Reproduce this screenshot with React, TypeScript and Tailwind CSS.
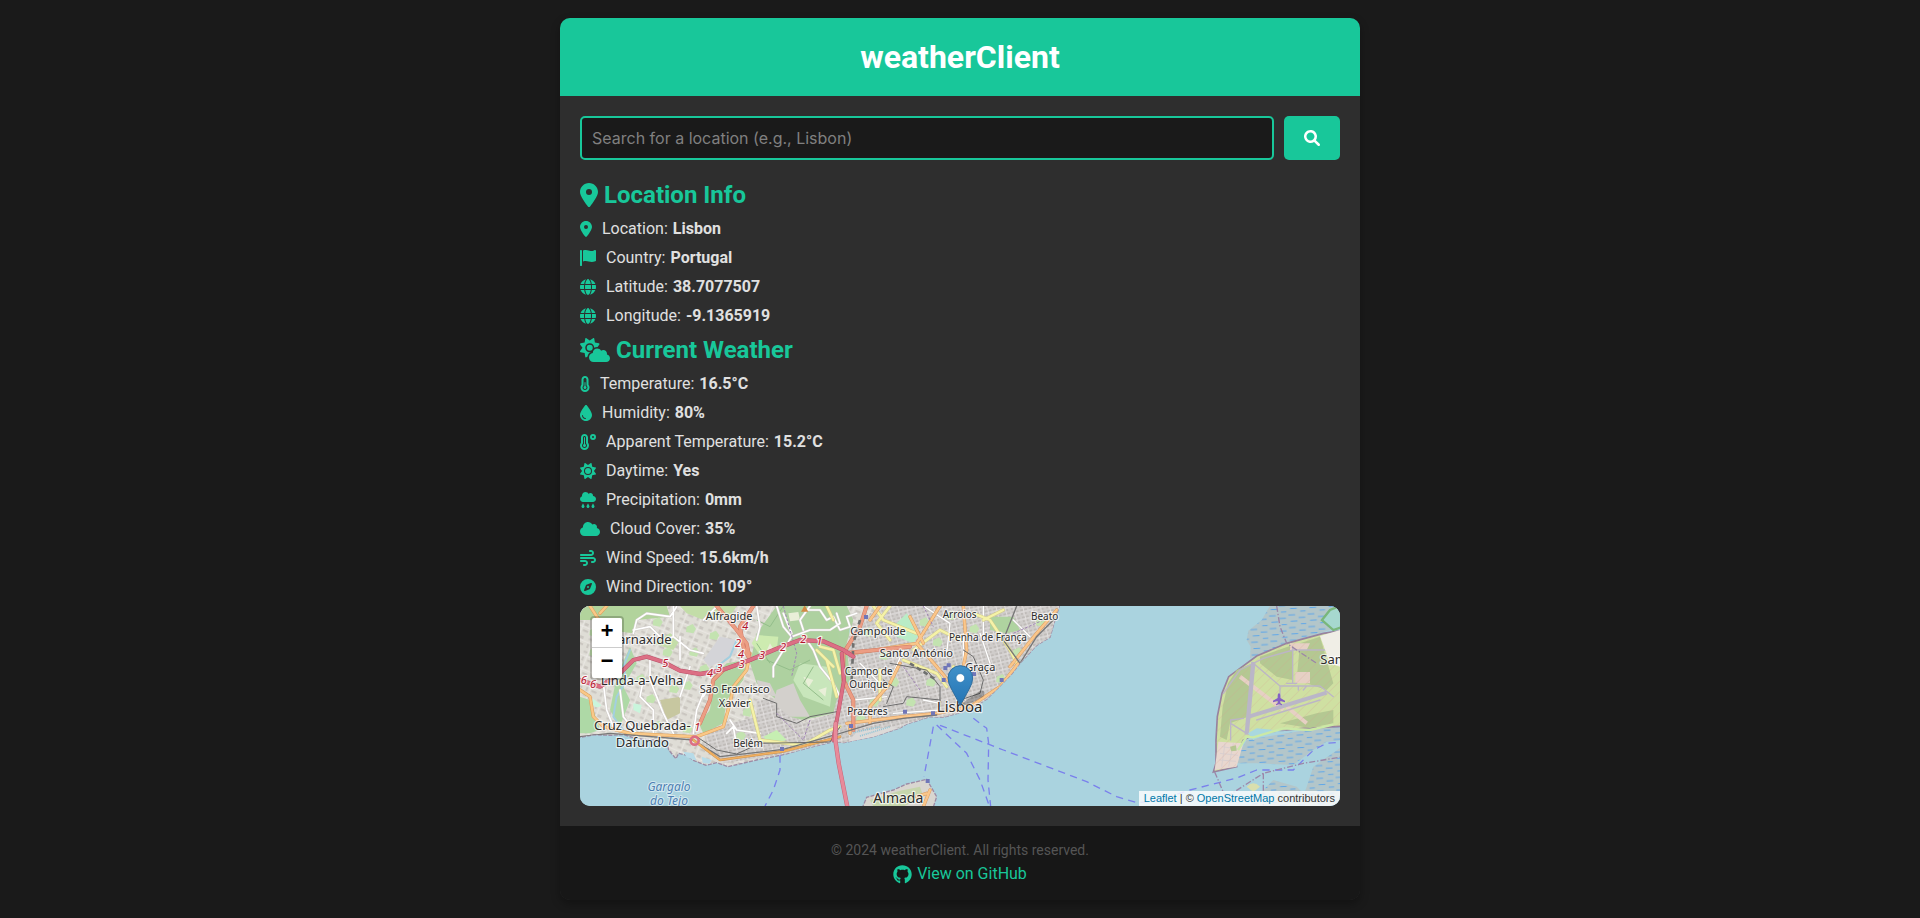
import type { FormEvent, ReactNode } from "react";
import type { IconType } from "react-icons";
import {
  FaCloud,
  FaCloudRain,
  FaCloudSun,
  FaCompass,
  FaDroplet,
  FaGithub,
  FaGlobe,
  FaLocationDot,
  FaSun,
  FaTemperatureHalf,
  FaTemperatureHigh,
  FaWind,
} from "react-icons/fa6";

const FlagIcon: IconType = ({ className }) => (
  <svg viewBox="0 0 512 512" fill="currentColor" className={className} aria-hidden>
    <path d="M64 496C64 504.8 56.75 512 48 512h-32C7.25 512 0 504.8 0 496V32c0-17.75 14.25-32 32-32s32 14.25 32 32V496zM476.3 0c-6.365 0-13.01 1.35-19.34 4.233c-45.69 20.86-79.56 27.94-107.8 27.94c-59.96 0-94.81-31.86-163.9-31.87C160.9 .3055 131.6 4.867 96 15.75v350.5c32-9.984 59.87-14.1 84.85-14.1c73.63 0 124.9 31.78 198.6 31.78c31.91 0 68.02-5.971 111.1-23.09C504.1 355.9 512 344.4 512 332.1V30.73C512 11.1 495.3 0 476.3 0z" />
  </svg>
);

const SearchIcon: IconType = ({ className }) => (
  <svg viewBox="0 0 512 512" fill="currentColor" className={className} aria-hidden>
    <path d="M500.3 443.7l-119.7-119.7c27.22-40.41 40.65-90.9 33.46-144.7C401.8 87.79 326.8 13.32 235.2 1.723C99.01-15.51-15.51 99.01 1.724 235.2c11.6 91.64 86.08 166.7 177.6 178.9c53.8 7.189 104.3-6.236 144.7-33.46l119.7 119.7c15.62 15.62 40.95 15.62 56.57 0C515.9 484.7 515.9 459.3 500.3 443.7zM79.1 208c0-70.58 57.42-128 128-128s128 57.42 128 128c0 70.58-57.42 128-128 128S79.1 278.6 79.1 208z" />
  </svg>
);

type Fact = { icon: IconType; iconWidth: string; label: string; value: string };

const locationFacts: Fact[] = [
  { icon: FaLocationDot, iconWidth: "w-3", label: "Location", value: "Lisbon" },
  { icon: FlagIcon, iconWidth: "w-4", label: "Country", value: "Portugal" },
  { icon: FaGlobe, iconWidth: "w-4", label: "Latitude", value: "38.7077507" },
  { icon: FaGlobe, iconWidth: "w-4", label: "Longitude", value: "-9.1365919" },
];

const weatherFacts: Fact[] = [
  { icon: FaTemperatureHalf, iconWidth: "w-[10px]", label: "Temperature", value: "16.5°C" },
  { icon: FaDroplet, iconWidth: "w-3", label: "Humidity", value: "80%" },
  { icon: FaTemperatureHigh, iconWidth: "w-4", label: "Apparent Temperature", value: "15.2°C" },
  { icon: FaSun, iconWidth: "w-4", label: "Daytime", value: "Yes" },
  { icon: FaCloudRain, iconWidth: "w-4", label: "Precipitation", value: "0mm" },
  { icon: FaCloud, iconWidth: "w-5", label: "Cloud Cover", value: "35%" },
  { icon: FaWind, iconWidth: "w-4", label: "Wind Speed", value: "15.6km/h" },
  { icon: FaCompass, iconWidth: "w-4", label: "Wind Direction", value: "109°" },
];

type SectionProps = { icon: IconType; iconWidth: string; title: string; facts: Fact[] };

function Section({ icon: Icon, iconWidth, title, facts }: SectionProps) {
  return (
    <section>
      <h2 className="mb-[10px] flex h-[29px] items-center gap-[6px] text-2xl font-bold text-[#18c79a]">
        <Icon className={`h-6 ${iconWidth}`} aria-hidden />
        {title}
      </h2>
      <ul>
        {facts.map((fact) => (
          <li key={fact.label} className="mb-[10px] flex h-[19px] items-center">
            <fact.icon className={`mr-[10px] h-4 text-[#18c79a] ${fact.iconWidth}`} aria-hidden />
            <span className="mr-[5px]">{fact.label}:</span>
            <strong className="font-bold">{fact.value}</strong>
          </li>
        ))}
      </ul>
    </section>
  );
}

type Label = { x: number; y: number; size: number; text: string };

/* Three map units make one pixel. */
const places: Label[] = [
  { x: 477, y: 60, size: 33, text: "Alfragide" },
  { x: 212, y: 132, size: 39, text: "Carnaxide" },
  { x: 216, y: 256, size: 39, text: "Linda-a-Velha" },
  { x: 494, y: 279, size: 33, text: "São Francisco" },
  { x: 494, y: 321, size: 33, text: "Xavier" },
  { x: 217, y: 390, size: 39, text: "Cruz Quebrada-" },
  { x: 217, y: 441, size: 39, text: "Dafundo" },
  { x: 534, y: 441, size: 30, text: "Belém" },
  { x: 924, y: 105, size: 33, text: "Campolide" },
  { x: 1169, y: 55, size: 30, text: "Arroios" },
  { x: 1424, y: 60, size: 30, text: "Beato" },
  { x: 1254, y: 124, size: 30, text: "Penha de França" },
  { x: 1039, y: 170, size: 33, text: "Santo António" },
  { x: 1231, y: 212, size: 33, text: "Graça" },
  { x: 896, y: 225, size: 30, text: "Campo de" },
  { x: 896, y: 264, size: 30, text: "Ourique" },
  { x: 892, y: 344, size: 30, text: "Prazeres" },
  { x: 1169, y: 336, size: 45, text: "Lisboa" },
  { x: 985, y: 610, size: 42, text: "Almada" },
  { x: 2336, y: 191, size: 39, text: "Samouco" },
];

const waterNames: Label[] = [
  { x: 297, y: 573, size: 36, text: "Gargalo" },
  { x: 297, y: 616, size: 36, text: "do Tejo" },
];

const shields: Label[] = [
  { x: 526, y: 90, size: 33, text: "4" },
  { x: 504, y: 140, size: 33, text: "2" },
  { x: 513, y: 173, size: 33, text: "4" },
  { x: 576, y: 178, size: 33, text: "3" },
  { x: 515, y: 204, size: 33, text: "3" },
  { x: 448, y: 217, size: 33, text: "3" },
  { x: 420, y: 230, size: 33, text: "4" },
  { x: 286, y: 202, size: 33, text: "5" },
  { x: 639, y: 152, size: 33, text: "2" },
  { x: 700, y: 129, size: 33, text: "2" },
  { x: 748, y: 136, size: 33, text: "1" },
  { x: 41, y: 253, size: 33, text: "6" },
  { x: 69, y: 264, size: 33, text: "6" },
  { x: 382, y: 394, size: 33, text: "1" },
];

/* Small parks and squares scattered over the built-up area. */
const greens = [
  [250, 60], [350, 80], [360, 150], [230, 290], [340, 250], [500, 400], [520, 330], [880, 90], [930, 160], [960, 240],
  [900, 300], [1070, 240], [1090, 120], [1200, 80], [1330, 150], [1280, 230], [1400, 60], [1130, 40], [60, 150], [250, 370],
  [280, 150], [200, 230], [340, 380], [420, 100], [390, 200], [60, 90], [300, 260], [1010, 300], [1050, 60], [860, 350],
];

function Line({ d, color, width, casing, dash }: { d: string; color: string; width: number; casing?: string; dash?: string }) {
  return (
    <g fill="none" strokeLinecap="round" strokeLinejoin="round">
      {casing && <path d={d} stroke={casing} strokeWidth={width + 3} />}
      <path d={d} stroke={color} strokeWidth={width} strokeDasharray={dash} strokeLinecap={dash ? "butt" : "round"} />
    </g>
  );
}

const northShore =
  "M0 0V412L30 412 75 404 120 406 160 404 200 416 290 424 296 450 306 462 318 476 326 460 350 466 372 482 408 496 440 488 474 500 560 480 640 464 720 442 790 425 822 428 830 426 910 410 990 384 1010 372 1080 350 1120 352 1170 338 1210 322 1250 298 1290 258 1325 222 1350 190 1400 136 1440 112 1452 70 1468 18V0Z";

function StreetMap() {
  return (
    <svg
      className="absolute inset-0 h-full w-full"
      viewBox="0 0 2280 600"
      preserveAspectRatio="xMidYMid slice"
      role="img"
      aria-label="Map of Lisbon"
    >
      <defs>
        <pattern id="streets" width="26" height="22" patternUnits="userSpaceOnUse" patternTransform="rotate(-14)">
          <rect width="26" height="22" fill="#cfccca" />
          <path d="M3 3H11V8H3ZM15 3H23V8H15ZM3 14H9V19H3ZM14 13H20V19H14Z" fill="#bfbbb8" />
          <path d="M0 11H26M12 11V22M13 0V11" stroke="#e8e6e5" strokeWidth="2" />
        </pattern>
        <pattern id="suburb" width="46" height="40" patternUnits="userSpaceOnUse" patternTransform="rotate(22)">
          <rect width="46" height="40" fill="#dfddd6" />
          <path d="M4 4H16V10H4ZM22 6H34V14H22ZM6 22H12V34H6ZM24 26H40V32H24Z" fill="#cac6c0" />
          <path d="M0 18H46M18 0V40" stroke="#efeeeb" strokeWidth="2" />
        </pattern>
        <pattern id="marsh" width="58" height="38" patternUnits="userSpaceOnUse" patternTransform="rotate(-3)">
          <rect width="58" height="38" fill="#b3c6ca" />
          <path d="M4 6H24M34 15H54M10 25H30M40 34H56" stroke="#4a9ff0" strokeWidth="2.4" />
        </pattern>
        <pattern id="hatch" width="22" height="22" patternUnits="userSpaceOnUse" patternTransform="rotate(45)">
          <path d="M0 0V22" stroke="#d79c8c" strokeWidth="2" opacity="0.6" />
        </pattern>
        <clipPath id="north">
          <path d={northShore} />
        </clipPath>
        <linearGradient id="pin" x1="0" y1="0" x2="0" y2="1">
          <stop offset="0" stopColor="#4191c9" />
          <stop offset="1" stopColor="#2474b4" />
        </linearGradient>
      </defs>
      <rect width="2280" height="600" fill="#aad3df" />
      <g transform="translate(-30 -18)">
        <path d={northShore} fill="url(#suburb)" stroke="#9d8ba5" strokeWidth="4" strokeDasharray="12 4" />
        <g clipPath="url(#north)">
          <path d="M440 340L480 370 560 350 560 300 620 300 700 370 790 340 800 200 900 40 1000 0H1480V300L1200 340 1000 390 780 440 460 490 400 430Z" fill="url(#streets)" />
          <path d="M620 18H720L830 18 850 60 830 130 840 240 800 300 790 340 700 360 660 350 620 300 560 250 540 190 560 100Z" fill="#aed1a0" />
          <path d="M620 270L670 250 690 300 720 350 660 350 610 310ZM560 240L600 250 620 290 570 280Z" fill="#d3d0cc" />
          <path d="M30 18H190L290 18 300 50 200 60 190 100 110 90 80 60 30 60Z" fill="#b2d39c" />
          <path d="M330 18H500L480 50 400 60 350 40ZM300 100L330 120 310 150 250 130Z" fill="#c3dda8" />
          <path d="M30 290L60 300 90 390 60 400 30 400ZM180 140L140 230 120 330 150 380 180 300 160 260 200 190Z" fill="#aed9a6" />
          <path d="M430 230L470 190 530 180 520 240 470 300 460 370 400 400 386 370 420 330Z" fill="#b0d4a2" />
          <path d="M270 300L330 290 330 340 290 360Z" fill="#c7c7a0" />
          <path d="M560 105L625 110 620 150 570 165 545 130Z" fill="#cdebb0" />
          <path d="M450 110L500 120 500 160 420 200 400 180Z" fill="#d4d4d8" />
          <path d="M690 190L770 200 790 240 780 320 700 290 670 240Z" fill="#c8e6bb" />
          <path d="M750 18H800L790 50 810 130 790 190 750 120Z" fill="#add19e" />
          <path d="M980 70L1010 40 1050 100 1030 130 980 110Z" fill="#b9ecc6" />
          <path d="M1260 50L1330 50 1350 90 1310 100 1260 90Z" fill="#afd3a0" />
          <path d="M580 410L620 390 650 420 600 430Z" fill="#c6efb2" />
          <path d="M70 296A12 12 0 1 0 94 316ZM190 310L215 315 210 340 190 330Z" fill="#c9f5dc" />
          <path d="M655 40L685 36 690 60 660 64ZM700 230L730 240 716 262ZM745 270L770 262 766 290ZM600 130L612 150 590 152Z" fill="#e9efd8" />
          <path d="M640 18L600 80 560 60M590 180L660 210 720 180M730 200L700 250 760 300M560 130L600 190" fill="none" stroke="#93bd8a" strokeWidth="3" />
          {greens.map(([x, y]) => (
            <path key={`${x}-${y}`} d={`M${x} ${y}l18 -8 10 14 -8 14 -22 -4z`} fill="#c3e3b0" />
          ))}
          <Line d="M180 150L160 200 170 240 140 290 130 350 160 390M500 120L480 170 440 200" color="#a3cfe0" width={6} />
          <Line d="M250 400V330L210 290 220 240M190 100L200 60 230 40 300 50 320 20M190 90L240 80 280 120 310 110V20M310 110L360 150 400 160M330 290L360 200M100 250L110 330 130 380M150 270L160 350 200 400M400 280L380 330 370 400M400 60L440 20M330 180V110M240 170V240L280 340 310 400M560 18L570 80 560 120M620 18L640 80 665 110 610 200 610 230M665 110L720 90 780 90 810 70 800 40M700 105L730 150 750 200 790 250 810 290M640 40L665 100M470 400L490 380 500 440M480 360L500 390 570 400M400 290L430 240M720 18L690 60 700 90M700 30H750L770 60 790 50 810 90 840 80 830 50 860 40" color="#fff" width={5} casing="#cfcac6" />
          <Line d="M1060 18L1140 70 1130 160M1240 18V120M1180 100V260M1230 100L1260 190M870 190L940 260M850 300L950 290M970 340L1110 330M1000 150L970 220M1330 60L1380 110M1060 300L1110 310" color="#fff" width={4} casing="#c4c0bd" />
          <Line d="M60 18L100 80 120 60M110 18L90 40M30 270L60 290 70 350 100 380 180 400 370 410M380 410L460 380 480 310 490 260 530 210 540 160" color="#f9c887" width={7} casing="#dd9f5c" />
          <Line d="M540 300L570 420 700 436 780 390 810 380M740 150L790 200M770 180L800 290M770 18L790 60" color="#f5f2a8" width={7} casing="#d2cd88" />
          <Line d="M750 140L790 150 810 220M910 18L940 60 1040 100M960 18L920 70 960 120M1030 150L1110 90 1170 120M1210 40L1260 60 1320 150 1340 190M1000 180L1100 220 1130 260M930 210V300M1150 200L1170 300M1300 30L1240 60" color="#f5f2a8" width={7} casing="#d2cd88" />
          <Line d="M850 160L1040 130 1110 18M1040 130L1100 200 1150 260 1180 320M1180 18L1190 150 1180 200M1020 50L1060 130M990 190L960 250 900 320V370M1320 200L1400 100 1460 30M830 370L1000 350 1100 340 1200 320 1290 260 1345 190M930 18L900 60M840 400L840 380" color="#fac68a" width={7} casing="#d99c62" />
          <Line d="M440 18L500 90 530 130 540 180M550 18L510 80 520 140 540 180 460 210 430 240 420 300 390 370M890 18L870 80 820 160 820 240 850 300 850 390M820 160L1020 140" color="#ec9d83" width={9} casing="#cf7a66" />
          <Line d="M30 410L120 400 370 420 450 470 640 448 810 400 910 370 1000 355 1100 345M1350 190L1300 120 1340 18M1350 190L1400 110 1450 60" color="#777" width={4} />
          <Line d="M370 420L450 480 640 454 810 410" color="#f0b060" width={5} casing="#c98f50" />
          <Line d="M380 410L440 450 500 462 570 430 780 426 810 380M580 295L620 310V350L680 370 720 350 800 335M940 320L1000 310 1010 290 1110 300M950 310L970 260 940 240M1170 300L1230 280 1240 240 1210 170 1180 150M960 190L1070 210 1110 260V320" color="#6b6b6b" width={3} />
          <Line d="M640 18L680 160 665 230M620 340L700 420 720 360M1060 18L1090 80M1000 200L1050 270M1330 100L1420 60" color="#a084b5" width={3} dash="8 5" />
          <Line d="M870 60L850 130 845 240M1020 190L1100 240" color="#6f706f" width={8} dash="14 10" />
          <Line d="M30 240L90 260 150 220 190 180 230 170 280 186 330 212 390 222 450 212 540 180 620 146 690 120 760 124 820 150 850 170" color="#dc6f84" width={10} casing="#b9536b" />
          <Line d="M815 160L822 240 806 330 795 390 790 420" color="#dc6f84" width={9} casing="#b9536b" />
          <circle cx="374" cy="422" r="12" fill="none" stroke="#dc6f84" strokeWidth="8" />
        </g>
        <path d="M340 455L370 460 380 482 350 472ZM395 470L425 480 418 492 398 488Z" fill="#b7dbe8" />
        <path d="M835 425L910 410 985 384 960 380 860 396Z" fill="#dddad8" />
        <path d="M850 398L930 380M870 408L960 380" stroke="#8fc4d6" strokeWidth="5" strokeDasharray="3 3" />
        <Line d="M797 370L796 420 806 490 836 640" color="#e88a9a" width={10} casing="#c56478" />
        <path d="M870 640L890 592 970 570 1010 552 1070 538 1100 590 1084 640Z" fill="#d9d6d0" stroke="#9d8ba5" strokeWidth="4" strokeDasharray="12 4" />
        <path d="M900 600L990 572 1050 560 1060 590 1000 620 910 620Z" fill="#c6d6ac" />
        <Line d="M1080 570L1060 620M1070 580L1040 590" color="#fac68a" width={7} casing="#d99c62" />

        <Line d="M630 466V510L610 570 585 618M1090 380L1062 530M1100 375L1190 460 1230 540 1266 640M1210 355L1250 385 1256 430 1254 540 1264 640M1110 376L1300 450 1550 545 1640 590 1700 608 1760 602 1860 570 2000 534 2060 510H2170L2230 450 2270 430 2330 425" color="#7a80ec" width={4} dash="22 16" />

        <path d="M2110 0L2075 60 2035 92 2030 120 2042 140 2040 175 2150 130 2280 90 2330 60V0Z" fill="url(#marsh)" />
        <path d="M2030 420L2330 370V420L2270 425 2230 450 2170 495 2060 490 1990 490ZM2230 500L2330 430V640H2180L2210 560Z" fill="url(#marsh)" />
        <path d="M2080 570L2110 540 2180 560 2220 600 2170 640H2020Z" fill="url(#marsh)" />
        <path d="M1930 516L2000 500 1994 478 2020 420 2060 400 2150 390 2200 385 2330 378V90L2260 100 2150 130 2060 168 1976 230 1956 280 1942 350 1938 420 1938 490Z" fill="#cfe0a2" stroke="#98829e" strokeWidth="5" />
        <path d="M2000 210L2048 190 2040 250 2034 350 1980 370 1970 420 1950 410 1958 320 1974 250ZM2070 170L2170 134 2168 240 2120 230 2070 190ZM2190 130L2250 110 2290 250 2270 270 2180 240ZM2130 370L2240 340 2290 330V370L2220 384Z" fill="#b4c892" />
        <path d="M1945 425L2020 430 2000 500 1934 510Z" fill="#e8d7cf" />
        <path d="M1955 440L2010 448M1950 460L2004 466M1948 480L1998 484M1965 430L1955 500M1990 430L1976 500" stroke="#d9cfcf" strokeWidth="3" />
        <path d="M1980 440L1998 436 2000 452 1984 454Z" fill="#b4c892" />
        <path d="M2176 216H2220V250H2176ZM2160 130L2220 130 2210 150 2160 150Z" fill="#e6d0c4" />
        <path d="M2010 230L2140 330M2150 320L2210 370" stroke="#e6d0c4" strokeWidth="12" />
        <path d="M1930 516L2000 500 1994 478 2020 420 2060 400 2330 378V90L2150 130 2060 168 1976 230 1942 350Z" fill="url(#hatch)" />
        <path d="M2050 186L2030 404" stroke="#bab6c8" strokeWidth="13" />
        <path d="M2036 350L2270 278" stroke="#bab6c8" strokeWidth="12" />
        <Line d="M2050 190L2130 258H2250L2290 290M2168 140V250M2150 250H2180M2060 360L2250 300M1982 420V360L2020 355M1982 370L2030 400M1960 280L2010 210 2080 175 2170 150H2310M2130 258V300M2185 270V258M2200 270L2210 258" color="#bcb5c6" width={4} />
        <path d="M2250 108L2310 90V200L2280 190Z" fill="#f0eee6" />
        <path d="M2256 60L2280 30 2320 14V80L2290 90Z" fill="#a6d8cf" stroke="#79b77b" strokeWidth="7" />
        <path d="M2034 400L2060 385 2110 390 2150 392 2090 400 2050 420Z" fill="#a9d8df" />
        <path d="M2004 450L2030 410 2050 412 2140 385 2220 390 2290 374" stroke="#cbe9a6" strokeWidth="7" fill="none" />
        <path d="M2030 560Q2050 540 2070 560L2050 576Z" fill="#d9dfae" />
        <Line d="M1934 516L1970 600M1970 590L2080 520 2200 490 2320 470M2080 520V620M2120 18L2130 80 2150 130 2240 190" color="#9c86a8" width={4} dash="18 6 4 6" />
        <path d="M2127 280Q2131 280 2131 290V294L2145 302V307L2131 303V309L2136 313V316L2127 313 2118 316V313L2123 309V303L2109 307V302L2123 294V290Q2123 280 2127 280Z" fill="#8461c4" />
        <path d="M704 16L715 35H693Z" fill="#d08a44" />
        <g fill="#7076b8">
          <path d="M882 45h12v12h-12zM1130 190h12v12h-12zM1120 198h12v12h-12zM1115 234h12v12h-12zM1206 216h12v12h-12zM1289 234h12v12h-12zM999 329h12v12h-12zM1083 334h12v12h-12zM837 372h12v12h-12zM1067 537h12v12h-12zM630 441h12v12h-12z" />
        </g>
        <g textAnchor="middle" strokeLinejoin="round" paintOrder="stroke" fontFamily="'Noto Sans', sans-serif">
          <g fill="#2c2c2c" stroke="#fff" strokeOpacity="0.7" strokeWidth="7">
            {places.map((p) => (
              <text key={p.text} x={p.x} y={p.y} fontSize={p.size}>{p.text}</text>
            ))}
          </g>
          <g fill="#4d80b3" stroke="#fff" strokeOpacity="0.5" strokeWidth="6" fontStyle="italic">
            {waterNames.map((p) => (
              <text key={p.text} x={p.x} y={p.y} fontSize={p.size}>{p.text}</text>
            ))}
          </g>
          <g fill="#b3152c" stroke="#fff" strokeOpacity="0.8" strokeWidth="7" fontStyle="italic">
            {shields.map((p) => (
              <text key={`${p.x}-${p.y}`} x={p.x} y={p.y} fontSize={p.size}>{p.text}</text>
            ))}
          </g>
        </g>
        <path d="M1174 312L1230 272Q1250 268 1240 290L1190 316Z" fill="#000" opacity="0.25" />
        <path d="M1171 316L1146 270Q1134 250 1134 234A37 37 0 0 1 1208 234Q1208 250 1196 270Z" fill="url(#pin)" stroke="#2e6d9e" strokeWidth="3" />
        <circle cx="1171" cy="234" r="13" fill="#fff" stroke="#2f79b0" strokeWidth="2" />
      </g>
    </svg>
  );
}

function ZoomButton({ label, className, children }: { label: string; className?: string; children: ReactNode }) {
  return (
    <button
      type="button"
      aria-label={label}
      className={`flex h-[30px] w-[30px] items-center justify-center bg-white font-['Liberation_Mono',monospace] text-[22px] leading-[30px] font-bold text-black ${className ?? ""}`}
    >
      {children}
    </button>
  );
}

export default function App() {
  const handleSubmit = (event: FormEvent) => event.preventDefault();

  return (
    <div className="flex min-h-screen items-center justify-center bg-[#1a1a1a] font-[Roboto,sans-serif] text-base text-[#e0e0e0]">
      <div className="w-full max-w-[800px] overflow-hidden rounded-[10px] bg-[#2e2e2e] shadow-[0_4px_10px_rgba(0,0,0,0.3)]">
        <header className="bg-[#18c79a] p-5 text-center">
          <h1 className="text-[32px] leading-[38px] font-bold text-white">weatherClient</h1>
        </header>

        <main className="p-5">
          <form className="mb-5 flex gap-[10px]" onSubmit={handleSubmit}>
            <input
              type="text"
              aria-label="Location"
              placeholder="Search for a location (e.g., Lisbon)"
              className="h-11 min-w-0 flex-1 rounded-[5px] border-2 border-[#18c79a] bg-[#1a1a1a] px-[10px] font-[Inter,sans-serif] text-base text-white outline-none placeholder:text-[#808080]"
            />
            <button
              type="submit"
              aria-label="Search"
              className="flex h-11 w-14 items-center justify-center rounded-[5px] bg-[#18c79a] text-white"
            >
              <SearchIcon className="h-4 w-4" />
            </button>
          </form>

          <Section icon={FaLocationDot} iconWidth="w-[18px]" title="Location Info" facts={locationFacts} />
          <Section icon={FaCloudSun} iconWidth="w-[30px]" title="Current Weather" facts={weatherFacts} />

          <div className="relative h-[200px] overflow-hidden rounded-[10px] bg-[#aad3df]">
            <StreetMap />
            <div className="absolute top-[10px] left-[10px] overflow-hidden rounded-[4px] border-2 border-black/20 bg-clip-padding">
              <ZoomButton label="Zoom in" className="border-b border-[#ccc]">+</ZoomButton>
              <ZoomButton label="Zoom out">−</ZoomButton>
            </div>
            <div className="absolute right-0 bottom-0 bg-white/80 px-[5px] font-['Liberation_Sans',sans-serif] text-[11px] leading-[15px] text-[#333]">
              <a href="https://leafletjs.com" className="text-[#0078a8]">Leaflet</a>
              {" | © "}
              <a href="https://www.openstreetmap.org/copyright" className="text-[#0078a8]">OpenStreetMap</a>
              {" contributors"}
            </div>
          </div>
        </main>

        <footer className="flex flex-col items-center bg-[#171717] py-4">
          <p className="text-sm leading-[17px] text-[#555]">© 2024 weatherClient. All rights reserved.</p>
          <a href="https://github.com" className="mt-[5px] flex h-5 items-center gap-[5px] text-[#18c79a]">
            <FaGithub className="h-[19px] w-[19px]" aria-hidden />
            View on GitHub
          </a>
        </footer>
      </div>
    </div>
  );
}
